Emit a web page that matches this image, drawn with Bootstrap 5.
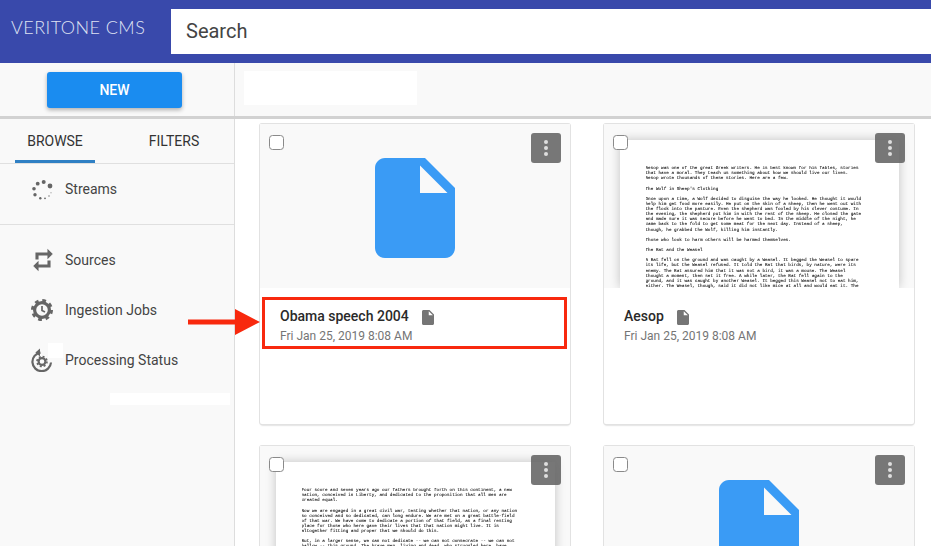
<!DOCTYPE html>
<html lang="en">
<head>
    <meta charset="UTF-8">
    <meta name="viewport" content="width=device-width, initial-scale=1.0">
    <title>Veritone CMS</title>
    <link href="https://cdn.jsdelivr.net/npm/bootstrap@5.3.0/dist/css/bootstrap.min.css" rel="stylesheet">
    <style>
        body {
            font-family: Roboto, "Liberation Sans", sans-serif;
            font-size: 14px;
            color: #3c3c3c;
            background: #fff;
            position: relative;
        }
        .top-bar {
            height: 63px;
            background: #3949ab;
            flex: none;
        }
        .logo-box {
            width: 171px;
            flex: none;
            padding-left: 11px;
            color: #dfe2f3;
            font-family: Lato, sans-serif;
            font-weight: 300;
            font-size: 18px;
            letter-spacing: .45px;
            line-height: 54px;
        }
        .search-box {
            width: auto;
            height: 45px;
            margin-top: 9px;
            padding-left: 15px;
            font-size: 20px;
            line-height: 45px;
            color: #444;
            border: 0;
            border-radius: 0;
        }
        .search-box::placeholder { color: #444; opacity: 1; }
        .tool-bar {
            height: 56px;
            flex: none;
            background: #f9f9f9;
            border-bottom: 3px solid #d2d2d2;
        }
        .tool-left {
            width: 235px;
            padding-left: 47px;
            border-right: 1px solid #ddd;
        }
        .btn-new {
            width: 135px;
            height: 36px;
            margin-top: 9px;
            background: #1a8cf0;
            color: #fff;
            font-size: 14px;
            font-weight: 500;
            border: 0;
            border-radius: 3px;
            box-shadow: 0 2px 4px rgba(0, 0, 0, .3);
        }
        .blank-box {
            width: 173px;
            height: 34px;
            margin: 8px 0 0 9px;
            background: #fff;
        }
        .side-col {
            width: 235px;
            flex: none;
            background: #f9f9f9;
            border-right: 1px solid #ddd;
        }
        .tab-row {
            height: 45px;
            padding-left: 15px;
            gap: 39px;
            border-bottom: 1px solid #e0e0e0;
        }
        .tab-item {
            width: 80px;
            height: 44px;
            line-height: 44px;
            text-align: center;
            color: #333;
        }
        .tab-item.on { border-bottom: 3px solid #3080c4; }
        .side-link {
            height: 50px;
            background: transparent;
            border: 0;
            padding: 0 0 0 65px;
            color: #444;
            position: relative;
            display: flex;
            align-items: center;
        }
        .side-link svg {
            position: absolute;
            left: 30px;
            top: 13px;
        }
        .side-sep {
            height: 1px;
            margin: 10px 0;
            background: #e0e0e0;
        }
        .patch-a, .patch-b {
            position: absolute;
            background: #fff;
        }
        .patch-a { left: 48px; top: 343px; width: 15px; height: 15px; }
        .patch-b { left: 110px; top: 393px; width: 120px; height: 12px; }
        .main-grid {
            display: grid;
            grid-template-columns: 310px 310px;
            grid-auto-rows: 300px;
            gap: 22px 34px;
            padding: 5px 0 0 25px;
        }
        .file-card {
            position: relative;
            border: 0;
            border-radius: 2px;
            box-shadow: 0 0 0 1px #e2e2e2, 0 2px 2px -1px rgba(0, 0, 0, .35);
        }
        .thumb-area {
            height: 164px;
            background: #f9f9f9;
            position: relative;
            overflow: hidden;
            flex: none;
        }
        .thumb-icon { margin-top: 34px; }
        .paper-sheet {
            position: absolute;
            left: 16px;
            right: 15px;
            top: 16px;
            bottom: 0;
            background: #fff;
            box-shadow: 0 0 10px rgba(0, 0, 0, .22);
            padding: 26px 0 0 25.5px;
        }
        .paper-sheet pre {
            margin: 0;
            font-family: "Liberation Mono", monospace;
            font-size: 4.34px;
            line-height: 5.12px;
            color: #111;
            overflow: hidden;
            text-rendering: geometricPrecision;
            -webkit-text-stroke: .08px #111;
            filter: blur(.25px);
        }
        .pick-box {
            position: absolute;
            left: 9px;
            top: 11px;
            width: 15px;
            height: 15px;
            margin: 0;
            border: 1px solid #8a8a8a;
            border-radius: 2px;
            background-color: #fff;
        }
        .menu-btn {
            position: absolute;
            right: 9px;
            top: 9px;
            width: 30px;
            height: 30px;
            padding: 0;
            border: 0;
            border-radius: 3px;
            background: rgba(100, 100, 100, .88);
            gap: 2px;
        }
        .menu-btn span {
            width: 4px;
            height: 4px;
            border-radius: 50%;
            background: #dedede;
        }
        .card-info { padding: 18px 20px 0; }
        .card-name {
            font-size: 14px;
            font-weight: 500;
            line-height: 20px;
            color: #2a2a2a;
        }
        .card-name svg { margin-left: 13px; }
        .card-date {
            margin-top: 2px;
            font-size: 12px;
            line-height: 16px;
            color: #757575;
        }
        .red-frame {
            position: absolute;
            left: 2px;
            top: 173px;
            width: 305px;
            height: 52px;
            border: 3px solid #f8290e;
        }
        .red-arrow {
            position: absolute;
            left: 188px;
            top: 309px;
        }
    </style>
</head>
<body class="d-flex flex-column vh-100 overflow-hidden">
    <header class="top-bar d-flex">
        <div class="logo-box">VERITONE CMS</div>
        <input class="search-box form-control flex-grow-1" type="text" placeholder="Search">
    </header>
    <div class="tool-bar d-flex">
        <div class="tool-left d-flex">
            <button class="btn btn-new" type="button">NEW</button>
        </div>
        <div class="blank-box"></div>
    </div>
    <div class="d-flex flex-grow-1 overflow-hidden">
        <aside class="side-col">
            <div class="tab-row d-flex">
                <div class="tab-item on">BROWSE</div>
                <div class="tab-item">FILTERS</div>
            </div>
            <div class="list-group list-group-flush">
                <a class="list-group-item side-link" href="#">
                    <svg width="24" height="24" viewBox="30 176 24 24" fill="#666"><circle cx="50" cy="185" r="2.4"/><circle cx="43.7" cy="181" r="2"/><circle cx="37.7" cy="182.7" r="1.9"/><circle cx="34" cy="187.7" r="1.8"/><circle cx="35" cy="193.7" r="1.7"/><circle cx="40.3" cy="197.3" r="1.2"/><circle cx="45" cy="197.3" r=".9"/><circle cx="49" cy="195" r=".7"/><circle cx="51" cy="191.7" r=".5"/></svg>
                    Streams
                </a>
                <div class="side-sep"></div>
                <a class="list-group-item side-link" href="#">
                    <svg width="24" height="24" viewBox="-1 0 24 24" fill="#666" stroke="#666" stroke-width="1.1"><path d="M7 7h10v3l4-4-4-4v3H5v6h2V7zm10 10H7v-3l-4 4 4 4v-3h12v-6h-2v4z"/></svg>
                    Sources
                </a>
                <a class="list-group-item side-link" href="#">
                    <svg width="24" height="24" viewBox="0 0 24 24" fill="none" stroke="#666"><circle cx="12" cy="12" r="7.4" stroke-width="3.2"/><circle cx="12" cy="12" r="9.5" stroke-width="3" stroke-dasharray="3.7 3.76"/><path d="M12 8v4.400l3 1.600" stroke-width="1.7"/></svg>
                    Ingestion Jobs
                </a>
                <a class="list-group-item side-link" href="#">
                    <svg width="24" height="24" viewBox="0 0 24 24" fill="none" stroke="#666"><path d="M21 14.500A9.300 9.300 0 1 1 10.500 4.600" stroke-width="2.2"/><path d="M10 .5v8l-4.600-4z" fill="#666" stroke="none"/><circle cx="12" cy="13.500" r="3.400" stroke-width="2.200"/><circle cx="12" cy="13.500" r="5" stroke-width="1.600" stroke-dasharray="2 1.930"/></svg>
                    Processing Status
                </a>
            </div>
        </aside>
        <main class="main-grid flex-grow-1">
            <div class="card file-card">
                <div class="thumb-area d-flex justify-content-center">
                    <svg class="thumb-icon" width="80" height="100" viewBox="4 2 16 20" fill="#3a9bf5"><path d="M6 2c-1.100 0-2 .9-2 2v16c0 1.100.9 2 2 2h12c1.100 0 2-.9 2-2V8l-6-6H6zm7 7V3.500L18.500 9H13z"/></svg>
                    <input class="form-check-input pick-box" type="checkbox">
                    <button class="btn menu-btn d-flex flex-column align-items-center justify-content-center" type="button"><span></span><span></span><span></span></button>
                </div>
                <div class="card-info">
                    <div class="card-name">Obama speech 2004<svg width="12" height="15" viewBox="4 2 16 20" fill="#757575"><path d="M6 2c-1.100 0-2 .9-2 2v16c0 1.100.9 2 2 2h12c1.100 0 2-.9 2-2V8l-6-6H6zm7 7V3.500L18.500 9H13z"/></svg></div>
                    <div class="card-date">Fri Jan 25, 2019 8:08 AM</div>
                </div>
                <div class="red-frame"></div>
            </div>
            <div class="card file-card">
                <div class="thumb-area">
                    <div class="paper-sheet"><pre>Aesop was one of the great Greek writers. He is best known for his fables, stories
that have a moral. They teach us something about how we should live our lives.
Aesop wrote thousands of these stories. Here are a few.

The Wolf in Sheep's Clothing

Once upon a time, a Wolf decided to disguise the way he looked. He thought it would
help him get food more easily. He put on the skin of a sheep, then he went out with
the flock into the pasture. Even the shepherd was fooled by his clever costume. In
the evening, the shepherd put him in with the rest of the sheep. He closed the gate
and made sure it was secure before he went to bed. In the middle of the night, he
came back to the fold to get some meat for the next day. Instead of a sheep,
though, he grabbed the Wolf, killing him instantly.

Those who look to harm others will be harmed themselves.

The Bat and the Weasel

A Bat fell on the ground and was caught by a Weasel. It begged the Weasel to spare
its life, but the Weasel refused. It told the Bat that birds, by nature, were its
enemy. The Bat assured him that it was not a bird, it was a mouse. The Weasel
thought a moment, then set it free. A while later, the Bat fell again to the
ground, and it was caught by another Weasel. It begged this Weasel not to eat him,
either. The Weasel, though, said it did not like mice at all and would eat it. The</pre></div>
                    <input class="form-check-input pick-box" type="checkbox">
                    <button class="btn menu-btn d-flex flex-column align-items-center justify-content-center" type="button"><span></span><span></span><span></span></button>
                </div>
                <div class="card-info">
                    <div class="card-name">Aesop<svg width="12" height="15" viewBox="4 2 16 20" fill="#757575"><path d="M6 2c-1.100 0-2 .9-2 2v16c0 1.100.9 2 2 2h12c1.100 0 2-.9 2-2V8l-6-6H6zm7 7V3.500L18.500 9H13z"/></svg></div>
                    <div class="card-date">Fri Jan 25, 2019 8:08 AM</div>
                </div>
            </div>
            <div class="card file-card">
                <div class="thumb-area">
                    <div class="paper-sheet"><pre>Four score and seven years ago our fathers brought forth on this continent, a new
nation, conceived in Liberty, and dedicated to the proposition that all men are
created equal.

Now we are engaged in a great civil war, testing whether that nation, or any nation
so conceived and so dedicated, can long endure. We are met on a great battle-field
of that war. We have come to dedicate a portion of that field, as a final resting
place for those who here gave their lives that that nation might live. It is
altogether fitting and proper that we should do this.

But, in a larger sense, we can not dedicate -- we can not consecrate -- we can not
hallow -- this ground. The brave men, living and dead, who struggled here, have</pre></div>
                    <input class="form-check-input pick-box" type="checkbox">
                    <button class="btn menu-btn d-flex flex-column align-items-center justify-content-center" type="button"><span></span><span></span><span></span></button>
                </div>
            </div>
            <div class="card file-card">
                <div class="thumb-area d-flex justify-content-center">
                    <svg class="thumb-icon" width="80" height="100" viewBox="4 2 16 20" fill="#3a9bf5"><path d="M6 2c-1.100 0-2 .9-2 2v16c0 1.100.9 2 2 2h12c1.100 0 2-.9 2-2V8l-6-6H6zm7 7V3.500L18.500 9H13z"/></svg>
                    <input class="form-check-input pick-box" type="checkbox">
                    <button class="btn menu-btn d-flex flex-column align-items-center justify-content-center" type="button"><span></span><span></span><span></span></button>
                </div>
            </div>
        </main>
    </div>
    <div class="patch-a"></div>
    <div class="patch-b"></div>
    <svg class="red-arrow" width="72" height="26" viewBox="0 0 72 26" fill="#f8290e"><path d="M0 10.500h47V0l25 13-25 13V15.500H0z"/></svg>
    <script src="https://cdn.jsdelivr.net/npm/bootstrap@5.3.0/dist/js/bootstrap.bundle.min.js"></script>
</body>
</html>
